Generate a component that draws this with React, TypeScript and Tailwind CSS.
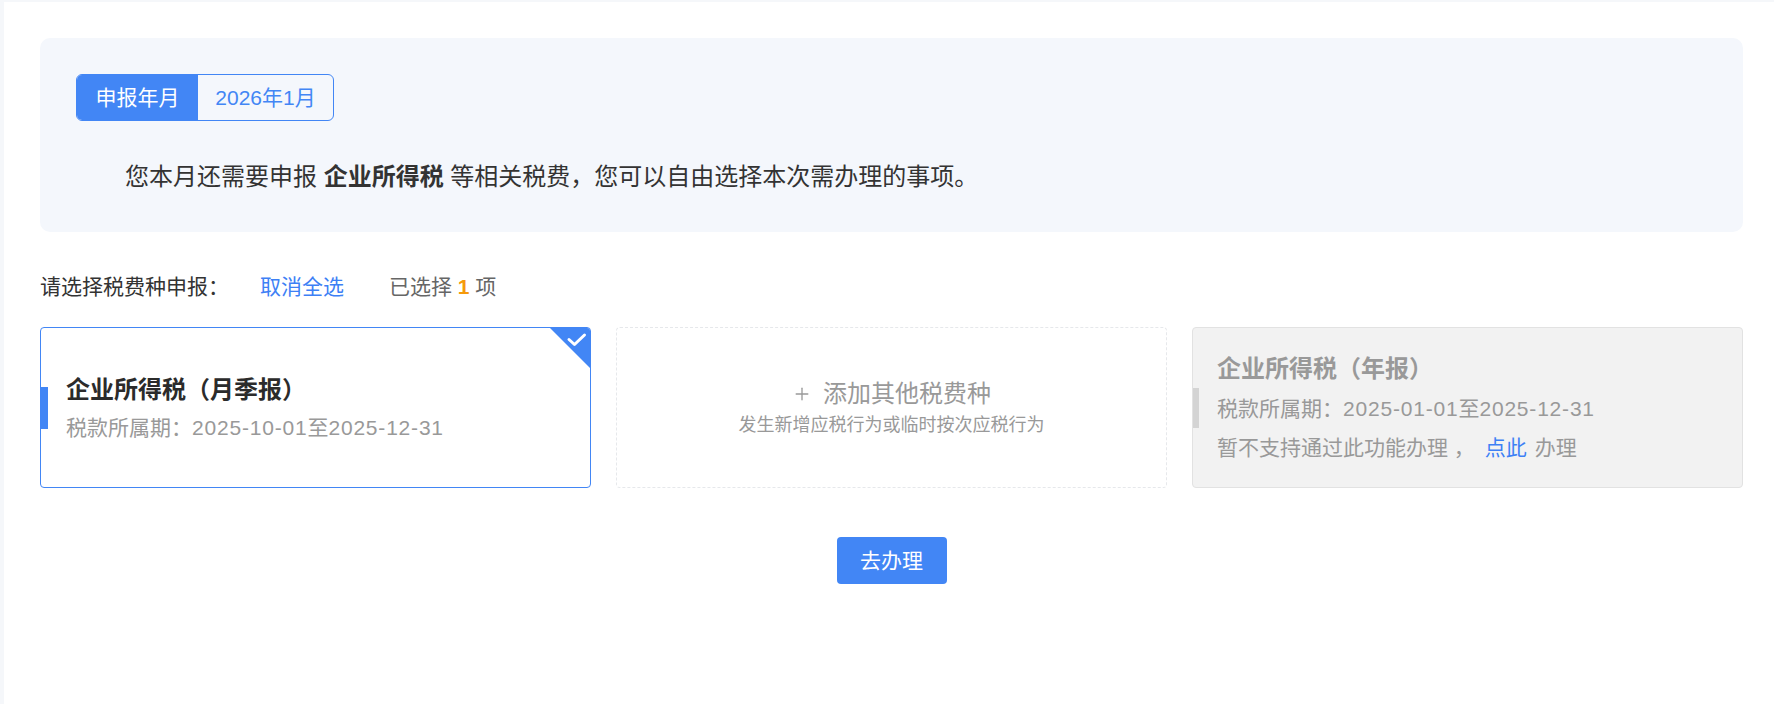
import { Plus } from "lucide-react";

const FONT = {
  fontFamily: '"Liberation Sans", "Noto Sans CJK SC", "Noto Sans", sans-serif',
};

function CornerCheck() {
  return (
    <svg
      className="absolute right-0 top-0"
      width="40"
      height="40"
      viewBox="0 0 40 40"
    >
      <polygon points="0,0 40,0 40,40" fill="#4286f5" />
      <path
        d="M19 11.5 L24.5 16.5 L34.5 7"
        fill="none"
        stroke="#fff"
        strokeWidth="3"
        strokeLinecap="round"
        strokeLinejoin="round"
      />
    </svg>
  );
}

export default function App() {
  return (
    <div className="min-h-screen bg-[#f5f7fa] pt-[2px] pl-[4px]" style={FONT}>
      <div className="min-h-[702px] bg-white pl-[36px] pr-[31px] pt-[36px]">
        <div className="rounded-[10px] bg-[#f4f7fc] pl-[36px] pt-[36px] pb-[37px]">
          <div className="flex h-[47px] w-[258px] overflow-hidden rounded-[6px] border border-[#4286f5] text-[21px]">
            <div className="flex w-[121px] items-center justify-center bg-[#4286f5] text-white">
              申报年月
            </div>
            <div className="flex flex-1 items-center justify-center text-[#4286f5]">
              2026年1月
            </div>
          </div>
          <p className="mt-[38px] pl-[49px] text-[24px] leading-[36px] text-[#333]">
            您本月还需要申报 <span className="font-bold">企业所得税</span>{" "}
            等相关税费，您可以自由选择本次需办理的事项。
          </p>
        </div>

        <div className="mt-[40px] flex items-center text-[21px] leading-[30px]">
          <span className="text-[#333]">请选择税费种申报：</span>
          <span className="ml-[31px] cursor-pointer text-[#3d80f5]">取消全选</span>
          <span className="ml-[45px] text-[#666]">
            已选择 <span className="font-bold text-[#f59a0c]">1</span> 项
          </span>
        </div>

        <div className="mt-[25px] grid grid-cols-3 gap-[25px]">
          <div className="relative flex h-[161px] flex-col justify-center overflow-hidden rounded-[4px] border border-[#4286f5] bg-white pl-[25px]">
            <div className="absolute left-0 top-1/2 h-[42px] w-[7px] -translate-y-1/2 bg-[#4286f5]" />
            <CornerCheck />
            <div className="text-[24px] font-bold leading-[34px] text-[#2b2b2b]">
              企业所得税（月季报）
            </div>
            <div className="mt-[6px] text-[21px] leading-[30px] text-[#999]">
              税款所属期：<span className="tracking-[0.8px]">2025-10-01</span>至
              <span className="tracking-[0.8px]">2025-12-31</span>
            </div>
          </div>

          <div className="flex h-[161px] flex-col items-center justify-center rounded-[4px] border border-dashed border-[#e6e8eb] bg-white">
            <div className="flex items-center text-[24px] leading-[34px] text-[#999]">
              <Plus className="mr-[11px] h-[20px] w-[20px]" strokeWidth={1.6} />
              添加其他税费种
            </div>
            <div className="text-[18px] leading-[28px] text-[#999]">
              发生新增应税行为或临时按次应税行为
            </div>
          </div>

          <div className="relative flex h-[161px] flex-col justify-center overflow-hidden rounded-[4px] border border-[#e2e2e2] bg-[#f2f2f2] pl-[24px]">
            <div className="absolute left-0 top-1/2 h-[40px] w-[6px] -translate-y-1/2 bg-[#d4d4d4]" />
            <div className="text-[24px] font-bold leading-[34px] text-[#999]">
              企业所得税（年报）
            </div>
            <div className="mt-[8px] text-[21px] leading-[30px] text-[#999]">
              税款所属期：<span className="tracking-[0.8px]">2025-01-01</span>至
              <span className="tracking-[0.8px]">2025-12-31</span>
            </div>
            <div className="mt-[9px] text-[21px] leading-[30px] text-[#999]">
              暂不支持通过此功能办理 ，
              <span className="ml-[10px] cursor-pointer text-[#3d80f5]">点此</span>
              <span className="ml-[8px]">办理</span>
            </div>
          </div>
        </div>

        <div className="mt-[49px] flex justify-center">
          <button
            type="button"
            className="h-[47px] w-[110px] rounded-[4px] bg-[#4286f5] text-[21px] text-white"
          >
            去办理
          </button>
        </div>
      </div>
    </div>
  );
}
